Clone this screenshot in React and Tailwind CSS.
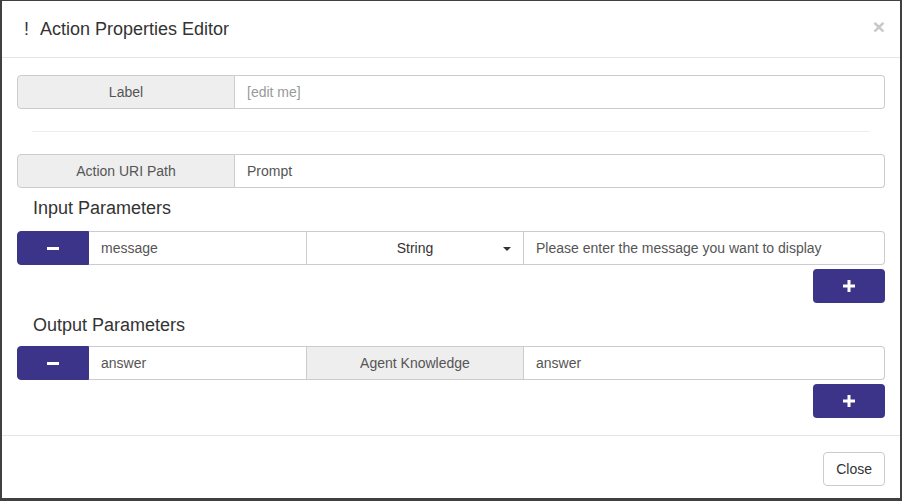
import React from "react";

const font = { fontFamily: '"Liberation Sans", Arial, sans-serif' };

function Minus() {
  return (
    <button className="w-[72px] h-[34px] shrink-0 bg-[#3c3489] rounded-l-[4px] border border-[#3c3489] flex items-center justify-center">
      <span className="block w-[12px] h-[3px] bg-white" />
    </button>
  );
}

function Plus() {
  return (
    <div className="flex justify-end mt-[4px]">
      <button className="w-[72px] h-[34px] bg-[#3c3489] rounded-[4px] flex items-center justify-center">
        <svg width="12" height="12" viewBox="0 0 12 12">
          <rect x="4.5" y="0" width="3" height="12" fill="#fff" />
          <rect x="0" y="4.5" width="12" height="3" fill="#fff" />
        </svg>
      </button>
    </div>
  );
}

export default function App() {
  return (
    <div
      className="w-[902px] h-[501px] bg-[#404040] pl-[2px] pt-[1px] pr-[2px] pb-[3px] text-[14px] text-[#333]"
      style={font}
    >
      <div className="w-full h-full bg-white flex flex-col">
        {/* Header */}
        <div className="h-[57px] border-b border-[#e5e5e5] flex items-center pl-[22px] pr-[15px] shrink-0">
          <span className="text-[18px] text-[#333] w-[16px]">!</span>
          <span className="text-[18px] text-[#333]">Action Properties Editor</span>
          <span className="ml-auto text-[21px] font-bold text-[#c8c8c8] leading-none -mt-[6px]">×</span>
        </div>

        {/* Body */}
        <div className="px-[15px] pt-[17px] flex-1">
          <div className="flex h-[34px]">
            <div className="w-[218px] shrink-0 bg-[#eee] border border-[#ccc] rounded-l-[4px] flex items-center justify-center text-[#555]">
              Label
            </div>
            <div className="flex-1 border border-l-0 border-[#ccc] rounded-r-[4px] flex items-center pl-[12px] text-[#999]">
              [edit me]
            </div>
          </div>

          <div className="mx-[15px] mt-[22px] mb-[22px] h-px bg-[#eee]" />

          <div className="flex h-[34px]">
            <div className="w-[218px] shrink-0 bg-[#eee] border border-[#ccc] rounded-l-[4px] flex items-center justify-center text-[#555]">
              Action URI Path
            </div>
            <div className="flex-1 border border-l-0 border-[#ccc] rounded-r-[4px] flex items-center pl-[12px] text-[#555]">
              Prompt
            </div>
          </div>

          <div className="pl-[16px] text-[18px] leading-[26px] mt-[7px] mb-[10px] text-[#333]">
            Input Parameters
          </div>

          <div className="flex h-[34px]">
            <Minus />
            <div className="w-[218px] shrink-0 border border-l-0 border-[#ccc] flex items-center pl-[12px] text-[#555]">
              message
            </div>
            <div className="w-[217px] shrink-0 border border-l-0 border-[#ccc] flex items-center justify-center relative text-[#333]">
              String
              <span className="absolute right-[12px] top-[15px] w-0 h-0 border-l-[4px] border-r-[4px] border-t-[4px] border-l-transparent border-r-transparent border-t-[#333]" />
            </div>
            <div className="flex-1 border border-l-0 border-[#ccc] rounded-r-[4px] flex items-center pl-[12px] text-[#555]">
              Please enter the message you want to display
            </div>
          </div>
          <Plus />

          <div className="pl-[16px] text-[18px] leading-[26px] mt-[9px] mb-[8px] text-[#333]">
            Output Parameters
          </div>

          <div className="flex h-[34px]">
            <Minus />
            <div className="w-[218px] shrink-0 border border-l-0 border-[#ccc] flex items-center pl-[12px] text-[#555]">
              answer
            </div>
            <div className="w-[217px] shrink-0 bg-[#eee] border border-l-0 border-[#ccc] flex items-center justify-center text-[#555]">
              Agent Knowledge
            </div>
            <div className="flex-1 border border-l-0 border-[#ccc] rounded-r-[4px] flex items-center pl-[12px] text-[#555]">
              answer
            </div>
          </div>
          <Plus />
        </div>

        {/* Footer */}
        <div className="border-t border-[#e5e5e5] flex justify-end px-[15px] pt-[16px] pb-[12px] shrink-0">
          <button className="h-[34px] px-[12px] border border-[#ccc] rounded-[4px] bg-white text-[#333] text-[14px]">
            Close
          </button>
        </div>
      </div>
    </div>
  );
}
